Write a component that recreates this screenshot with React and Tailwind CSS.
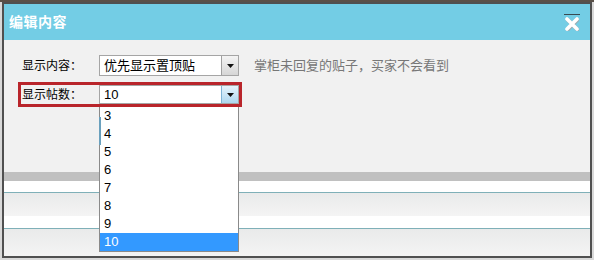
const FONT = '"Liberation Sans", "Noto Sans CJK SC", sans-serif';

function Arrow({ active }) {
  return (
    <div
      className={
        'flex h-full w-[17px] items-center justify-center border-l ' +
        (active
          ? 'border-[#7fb4d6] bg-gradient-to-b from-[#e6f4fc] to-[#aed7ef]'
          : 'border-[#a0a0a0] bg-gradient-to-b from-[#f4f4f4] to-[#d6d6d6]')
      }
    >
      <svg width="7" height="4" viewBox="0 0 7 4">
        <path d="M0 0h7L3.5 4z" fill="#111" />
      </svg>
    </div>
  );
}

function Select({ value, active }) {
  return (
    <div className="flex h-full w-[140px] items-stretch border border-[#a5a5a5] bg-white">
      <div className="flex flex-1 items-center pl-[4px] text-[13px] text-black">{value}</div>
      <Arrow active={active} />
    </div>
  );
}

export default function App() {
  const options = ['3', '4', '5', '6', '7', '8', '9', '10'];

  return (
    <div className="relative h-[260px] w-[594px] overflow-hidden bg-[#d9d9d9]" style={{ fontFamily: FONT }}>
      <div className="h-[2px] bg-[#5a5048]" />
      <div className="ml-[2px] flex h-[256px] w-[590px] flex-col border-2 border-[#505050]">
        {/* title bar */}
        <div className="flex h-[36px] shrink-0 items-center justify-between bg-[#73cde5] pl-[5px] pr-[10px]">
          <span className="text-[14px] font-bold tracking-[0.5px] text-white">编辑内容</span>
          <div className="flex flex-col items-center">
            <div className="mb-[2px] h-[1px] w-[16px] bg-[#3a4a50]" />
            <svg width="14" height="14" viewBox="0 0 14 14">
              <path d="M2 2L12 12M12 2L2 12" stroke="#9aaab0" strokeWidth="4" strokeLinecap="round" transform="translate(0.6 0.6)" />
              <path d="M2 2L12 12M12 2L2 12" stroke="#fff" strokeWidth="3.6" strokeLinecap="round" />
            </svg>
          </div>
        </div>

        {/* body */}
        <div className="relative flex flex-1 flex-col bg-[#f1f1f1] pt-[15px]">
          <div className="flex h-[21px] items-stretch pl-[18px]">
            <div className="flex w-[77px] items-center text-[12px] text-black">显示内容：</div>
            <Select value="优先显示置顶贴" />
            <div className="flex items-center pl-[15px] text-[13px] text-[#777]">掌柜未回复的贴子，买家不会看到</div>
          </div>

          <div className="ml-[14px] mt-[6px] flex h-[25px] w-[224px] items-stretch border-[3px] border-[#b9252b]">
            <div className="flex w-[78px] items-center pl-[1px] text-[12px] text-black">显示帖数：</div>
            <Select value="10" active />
          </div>

          <div className="mt-[65px] flex flex-1 flex-col">
            <div className="h-[9px] bg-[#c0c0c0]" />
            <div className="h-[11px] bg-white" />
            <div className="h-[1px] bg-[#7fb0b8]" />
            <div className="h-[23px] bg-gradient-to-b from-[#e9eaea] to-[#f4f4f4]" />
            <div className="h-[12px] bg-white" />
            <div className="h-[1px] bg-[#7fb0b8]" />
            <div className="flex-1 bg-gradient-to-b from-[#e9eaea] to-[#f4f4f4]" />
          </div>

          {/* open dropdown list */}
          <div className="absolute left-[95px] top-[67px] w-[140px] border border-t-0 border-[#8a8a8a] bg-white">
            {options.map((o) => (
              <div
                key={o}
                className={
                  'flex h-[18px] items-center pl-[4px] text-[13px] ' +
                  (o === '10' ? 'bg-[#3399ff] text-white' : 'text-black')
                }
              >
                {o}
              </div>
            ))}
          </div>
          <div className="absolute left-[95px] top-[77px] h-[28px] w-[2px] bg-[#6aa0bd]" />
        </div>
      </div>
    </div>
  );
}
